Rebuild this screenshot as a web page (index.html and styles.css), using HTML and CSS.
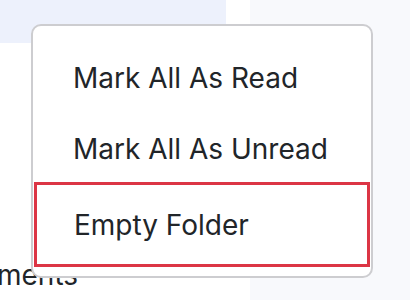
FILE: index.html
```html
<!DOCTYPE html>
<html lang="en">

<head>
    <meta charset="UTF-8">
    <meta name="viewport" content="width=device-width, initial-scale=1.0">
    <title>Folder menu</title>
    <link rel="stylesheet" href="styles.css">
</head>

<body>
    <div class="page">
        <!-- left column: folder list -->
        <div class="side">
            <div class="side-active"></div>
            <div class="side-label">ments</div>
        </div>
        <!-- right column -->
        <div class="content"></div>
    </div>

    <!-- dropdown menu -->
    <ul class="menu">
        <li class="menu-item first">Mark All As Read</li>
        <li class="menu-item second">Mark All As Unread</li>
        <li class="menu-item focus">Empty Folder</li>
    </ul>
</body>

</html>
```

FILE: styles.css
```css
* {
    margin: 0;
    padding: 0;
    box-sizing: border-box;
}

body {
    width: 410px;
    height: 300px;
    overflow: hidden;
    background-color: #ffffff;
    font-family: 'Inter', 'Liberation Sans', sans-serif;
    color: #212529;
}

.page {
    display: grid;
    grid-template-columns: 250px 160px;
    height: 300px;
}

.side {
    display: flex;
    flex-direction: column;
}

.side-active {
    width: 226px;
    height: 43px;
    background-color: #edf1fc;
}

.side-label {
    margin-top: 217px;
    margin-left: -3px;
    font-size: 28px;
    line-height: 30px;
}

.content {
    background-color: #f8f9fc;
}

.menu {
    position: absolute;
    top: 24px;
    left: 31px;
    width: 342px;
    height: 254px;
    list-style: none;
    background-color: #ffffff;
    border: 2px solid #cdcdd0;
    border-radius: 10px;
    padding: 15px 0 0 0;
}

.menu-item {
    display: flex;
    align-items: center;
    padding-left: 40px;
    font-size: 28px;
}

.first {
    height: 74px;
}

.second {
    height: 67px;
}

.focus {
    height: 85px;
    margin: 0 1px;
    padding-left: 37px;
    border: 3px solid #dc3545;
}
```
